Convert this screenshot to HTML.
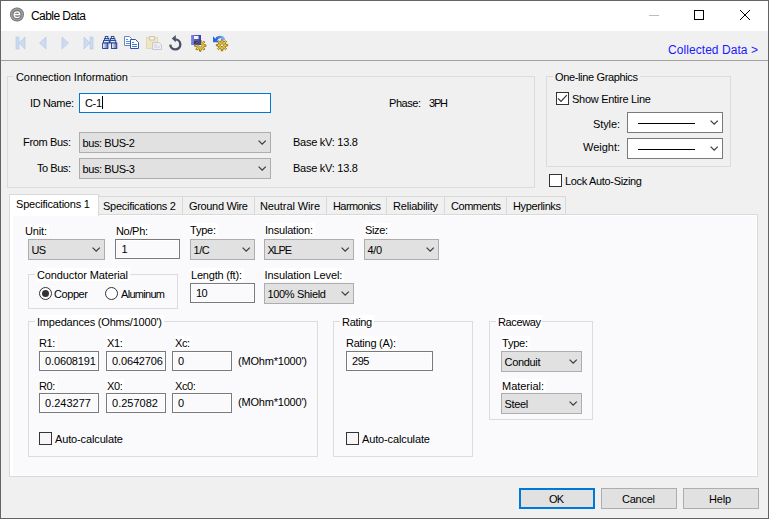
<!DOCTYPE html>
<html><head><meta charset="utf-8"><style>
html,body{margin:0;padding:0;width:769px;height:519px;overflow:hidden;background:#f0f0f0}
body{position:relative;font-family:"Liberation Sans",sans-serif}
.t{position:absolute;white-space:pre;font-family:"Liberation Sans",sans-serif}
.b{position:absolute;box-sizing:border-box}
svg.b{overflow:visible}
</style></head><body>
<div class="b" style="left:0;top:0;width:769px;height:519px;background:#f0f0f0"></div>
<div class="b" style="left:0px;top:0px;width:769px;height:31px;background:#fff"></div>
<div class="b" style="left:0px;top:0px;width:769px;height:1px;background:#646464"></div>
<div class="b" style="left:0px;top:0px;width:1px;height:519px;background:#646464"></div>
<div class="b" style="left:768px;top:0px;width:1px;height:519px;background:#646464"></div>
<div class="b" style="left:0px;top:518px;width:769px;height:1px;background:#646464"></div>
<svg class="b" style="left:0;top:0" width="30" height="30" viewBox="0 0 30 30">
<defs><radialGradient id="gi" cx="0.5" cy="0.5" r="0.5"><stop offset="0" stop-color="#8c8c8c"/><stop offset="0.6" stop-color="#7c7c7c"/><stop offset="0.8" stop-color="#a4a4a4"/><stop offset="1" stop-color="#5e5e5e"/></radialGradient></defs>
<circle cx="17" cy="14.5" r="7" fill="url(#gi)"/>
<path d="M14.3 14.6 H19.8 C19.8 12.8 18.8 11.8 17.1 11.8 C15.3 11.8 14.2 13.1 14.2 14.7 C14.2 16.4 15.4 17.5 17.1 17.5 C18.1 17.5 19 17.2 19.6 16.6" fill="none" stroke="#fff" stroke-width="1.2"/>
</svg>
<div class="t" style="left:31px;top:9px;font-size:12px;line-height:14px;letter-spacing:-0.559px;color:#000;">Cable Data</div>
<div class="b" style="left:649px;top:15px;width:10px;height:1px;background:#bdbdbd"></div>
<div class="b" style="left:694px;top:10px;width:10px;height:10px;border:1px solid #000"></div>
<svg class="b" style="left:739px;top:9px" width="12" height="12" viewBox="0 0 12 12"><path d="M1 1 L11 11 M11 1 L1 11" stroke="#000" stroke-width="1"/></svg>
<div class="b" style="left:1px;top:60px;width:767px;height:1px;background:#a0a0a0"></div>
<svg class="b" style="left:0;top:0" width="240" height="60" viewBox="0 0 240 60">
<rect x="16" y="37" width="3" height="12" fill="#cddbf2" stroke="#a9bfe3" stroke-width="0.5"/>
<path d="M25 37 L19 43 L25 49 Z" fill="#cddbf2" stroke="#a9bfe3" stroke-width="0.5"/>
<path d="M46 37 L39.5 43 L46 49 Z" fill="#cddbf2" stroke="#a9bfe3" stroke-width="0.5"/>
<path d="M62 37 L68.5 43 L62 49 Z" fill="#cddbf2" stroke="#a9bfe3" stroke-width="0.5"/>
<path d="M84 37 L90 43 L84 49 Z" fill="#cddbf2" stroke="#a9bfe3" stroke-width="0.5"/>
<rect x="90" y="37" width="3" height="12" fill="#cddbf2" stroke="#a9bfe3" stroke-width="0.5"/>
<defs>
<linearGradient id="bg1" x1="0" x2="1"><stop offset="0" stop-color="#ffffff"/><stop offset="1" stop-color="#4a68b8"/></linearGradient>
<linearGradient id="fl" x1="0" x2="1"><stop offset="0" stop-color="#8c90e8"/><stop offset="0.4" stop-color="#5a5ec8"/><stop offset="1" stop-color="#3c3fa0"/></linearGradient>
<linearGradient id="ua" x1="0" x2="1"><stop offset="0" stop-color="#2a66d8"/><stop offset="1" stop-color="#86b4f0"/></linearGradient>
</defs>
<!-- binoculars -->
<g stroke="#1e3c8c" stroke-width="0.9">
<rect x="105.3" y="36.4" width="2.6" height="2.2" fill="#ffffff"/>
<rect x="111.3" y="36.4" width="2.6" height="2.2" fill="#ffffff"/>
<rect x="104.4" y="38.6" width="4.5" height="2" fill="#c4d2f0"/>
<rect x="110.4" y="38.6" width="4.5" height="2" fill="#c4d2f0"/>
<rect x="103.5" y="40.6" width="5.8" height="2.4" fill="#f2f6ff"/>
<rect x="110" y="40.6" width="5.8" height="2.4" fill="#f2f6ff"/>
<rect x="102.6" y="43" width="5.3" height="5.5" fill="url(#bg1)"/>
<rect x="111.5" y="43" width="5.3" height="5.5" fill="url(#bg1)"/>
</g>
<rect x="108.8" y="41.5" width="1.5" height="1.5" fill="#1e3c8c"/>
<!-- copy -->
<path d="M124.5 36.5 H129.5 L131.5 38.5 V45.5 H124.5 Z" fill="#fdfdff" stroke="#6c86b8"/>
<path d="M126 39.5 H128 M126 41.5 H130 M126 43.5 H130" stroke="#5b8ee0"/>
<path d="M130.5 39.5 H135.5 L138.5 42.5 V48.5 H130.5 Z" fill="#fdfdff" stroke="#2c52aa"/>
<path d="M132 42.5 H134 M132 44.5 H137 M132 46.5 H137" stroke="#3a78dc"/>
<!-- paste disabled -->
<rect x="146.5" y="37.5" width="11" height="11" fill="#f1e6c4" stroke="#e2d8b8"/>
<rect x="149.5" y="36.5" width="5" height="3.5" fill="#f4f0e4" stroke="#cfc8b4"/>
<path d="M152.5 42.5 H159 L161.5 45 V49.5 H152.5 Z" fill="#eef0f4" stroke="#c4c8d0"/>
<path d="M154 45 H157 M154 47 H160" stroke="#c6ccd8"/>
<!-- refresh -->
<path d="M175.2 39.4 A5 5 0 1 1 170.3 44.6" fill="none" stroke="#4a5468" stroke-width="2.4"/>
<path d="M171.8 38.6 L175.8 35 L175.8 42.2 Z" fill="#4a5468"/>
<!-- save -->
<rect x="191" y="35" width="10" height="10" fill="url(#fl)"/>
<rect x="194" y="36" width="4.5" height="3" fill="#fff"/>
<rect x="194" y="41" width="4.5" height="3" fill="#3a3a40"/>
</svg>
<svg class="b" style="left:0;top:0" width="240" height="60" viewBox="0 0 240 60">
<g transform="translate(200.3,45.6)"><path d="M3.81 -0.84 L5.66 -0.71 L5.66 0.71 L3.81 0.84 L3.28 2.10 L4.50 3.49 L3.49 4.50 L2.10 3.28 L0.84 3.81 L0.71 5.66 L-0.71 5.66 L-0.84 3.81 L-2.10 3.28 L-3.49 4.50 L-4.50 3.49 L-3.28 2.10 L-3.81 0.84 L-5.66 0.71 L-5.66 -0.71 L-3.81 -0.84 L-3.28 -2.10 L-4.50 -3.49 L-3.49 -4.50 L-2.10 -3.28 L-0.84 -3.81 L-0.71 -5.66 L0.71 -5.66 L0.84 -3.81 L2.10 -3.28 L3.49 -4.50 L4.50 -3.49 L3.28 -2.10 Z" fill="#f6e06a" stroke="#8c6a00" stroke-width="0.9"/><circle r="2.9" fill="none" stroke="#c8a020" stroke-width="0.9"/><circle r="1.5" fill="#fffbe8" stroke="#7a5a00" stroke-width="0.7"/></g>
<rect x="191" y="35" width="10" height="10" fill="url(#fl)"/>
<rect x="194" y="36" width="4.5" height="3" fill="#f4f6ff"/>
<rect x="194" y="41" width="4.5" height="3" fill="#3a3e44"/>
<path d="M196 43.5 L198 41.5" stroke="#8a9090" stroke-width="0.8"/>
<g transform="translate(222,45.2)"><path d="M3.81 -0.84 L5.66 -0.71 L5.66 0.71 L3.81 0.84 L3.28 2.10 L4.50 3.49 L3.49 4.50 L2.10 3.28 L0.84 3.81 L0.71 5.66 L-0.71 5.66 L-0.84 3.81 L-2.10 3.28 L-3.49 4.50 L-4.50 3.49 L-3.28 2.10 L-3.81 0.84 L-5.66 0.71 L-5.66 -0.71 L-3.81 -0.84 L-3.28 -2.10 L-4.50 -3.49 L-3.49 -4.50 L-2.10 -3.28 L-0.84 -3.81 L-0.71 -5.66 L0.71 -5.66 L0.84 -3.81 L2.10 -3.28 L3.49 -4.50 L4.50 -3.49 L3.28 -2.10 Z" fill="#f6e06a" stroke="#8c6a00" stroke-width="0.9"/><circle r="2.9" fill="none" stroke="#c8a020" stroke-width="0.9"/><circle r="1.5" fill="#fffbe8" stroke="#7a5a00" stroke-width="0.7"/></g>
<path d="M216.2 40.6 A4 4 0 0 1 224.1 40.2" fill="none" stroke="url(#ua)" stroke-width="2.6"/>
<path d="M213 36.2 L213 42.2 L218.8 42.2 Z" fill="#2a66d8"/>
</svg>
<div class="t" style="left:668px;top:43px;font-size:12px;line-height:14px;letter-spacing:0.064px;color:#1a1aff;">Collected Data &gt;</div>
<div class="b" style="left:7px;top:76px;width:528px;height:112px;border:1px solid #dcdcdc;background:transparent;"></div>
<div class="b" style="left:14px;top:76px;width:116px;height:2px;background:#f0f0f0"></div>
<div class="t" style="left:16px;top:71px;font-size:11px;line-height:13px;letter-spacing:-0.086px;color:#000;">Connection Information</div>
<div class="t" style="left:30px;top:97px;font-size:11px;line-height:13px;letter-spacing:-0.353px;color:#000;">ID Name:</div>
<div class="b" style="left:79px;top:93px;width:192px;height:20px;border:1px solid #0078d7;background:#fff;"></div>
<div class="t" style="left:85px;top:97px;font-size:11px;line-height:13px;letter-spacing:-0.359px;color:#000;">C-1</div>
<div class="b" style="left:102px;top:96px;width:1px;height:13px;background:#000"></div>
<div class="t" style="left:23px;top:136px;font-size:11px;line-height:13px;letter-spacing:-0.344px;color:#000;">From Bus:</div>
<div class="b" style="left:79px;top:132px;width:192px;height:21px;border:1px solid #adadad;background:#e1e1e1;"></div>
<svg class="b" style="left:258px;top:139px" width="9" height="7" viewBox="0 0 9 7"><path d="M0.6 1.6 L4.2 5.2 L7.8 1.6" fill="none" stroke="#3c3c3c" stroke-width="1.25"/></svg>
<div class="t" style="left:82.5px;top:137px;font-size:11px;line-height:13px;letter-spacing:-0.420px;color:#000;">bus: BUS-2</div>
<div class="t" style="left:37px;top:162px;font-size:11px;line-height:13px;letter-spacing:-0.453px;color:#000;">To Bus:</div>
<div class="b" style="left:79px;top:158px;width:192px;height:21px;border:1px solid #adadad;background:#e1e1e1;"></div>
<svg class="b" style="left:258px;top:165px" width="9" height="7" viewBox="0 0 9 7"><path d="M0.6 1.6 L4.2 5.2 L7.8 1.6" fill="none" stroke="#3c3c3c" stroke-width="1.25"/></svg>
<div class="t" style="left:82.5px;top:163px;font-size:11px;line-height:13px;letter-spacing:-0.420px;color:#000;">bus: BUS-3</div>
<div class="t" style="left:389px;top:97px;font-size:11px;line-height:13px;letter-spacing:-0.456px;color:#000;">Phase:</div>
<div class="t" style="left:429px;top:97px;font-size:11px;line-height:13px;letter-spacing:-1.203px;color:#000;">3PH</div>
<div class="t" style="left:293px;top:136px;font-size:11px;line-height:13px;letter-spacing:-0.263px;color:#000;">Base kV: 13.8</div>
<div class="t" style="left:293px;top:162px;font-size:11px;line-height:13px;letter-spacing:-0.263px;color:#000;">Base kV: 13.8</div>
<div class="b" style="left:546px;top:76px;width:185px;height:91px;border:1px solid #dcdcdc;background:transparent;"></div>
<div class="b" style="left:553px;top:76px;width:87px;height:2px;background:#f0f0f0"></div>
<div class="t" style="left:555px;top:71px;font-size:11px;line-height:13px;letter-spacing:-0.355px;color:#000;">One-line Graphics</div>
<div class="b" style="left:556px;top:92px;width:13px;height:13px;border:1px solid #333;background:#fff"></div>
<svg class="b" style="left:556px;top:92px" width="13" height="13" viewBox="0 0 13 13"><path d="M2 6.3 L5 9.3 L10.8 3.2" fill="none" stroke="#333" stroke-width="1.2"/></svg>
<div class="t" style="left:572px;top:93px;font-size:11px;line-height:13px;letter-spacing:-0.281px;color:#000;">Show Entire Line</div>
<div class="t" style="left:593px;top:118px;font-size:11px;line-height:13px;letter-spacing:-0.106px;color:#000;">Style:</div>
<div class="b" style="left:627px;top:112px;width:96px;height:21px;border:1px solid #7a7a7a;background:#fff;"></div>
<div class="b" style="left:638px;top:123px;width:57px;height:1px;background:#000"></div>
<svg class="b" style="left:710px;top:119px" width="9" height="7" viewBox="0 0 9 7"><path d="M0.6 1.6 L4.2 5.2 L7.8 1.6" fill="none" stroke="#3c3c3c" stroke-width="1.25"/></svg>
<div class="t" style="left:583px;top:141px;font-size:11px;line-height:13px;letter-spacing:-0.018px;color:#000;">Weight:</div>
<div class="b" style="left:627px;top:138px;width:96px;height:21px;border:1px solid #7a7a7a;background:#fff;"></div>
<div class="b" style="left:638px;top:149px;width:57px;height:1px;background:#000"></div>
<svg class="b" style="left:710px;top:145px" width="9" height="7" viewBox="0 0 9 7"><path d="M0.6 1.6 L4.2 5.2 L7.8 1.6" fill="none" stroke="#3c3c3c" stroke-width="1.25"/></svg>
<div class="b" style="left:549px;top:174px;width:13px;height:13px;border:1px solid #333;background:#fff"></div>
<div class="t" style="left:565px;top:175px;font-size:11px;line-height:13px;letter-spacing:-0.332px;color:#000;">Lock Auto-Sizing</div>
<div class="b" style="left:9px;top:214px;width:749px;height:263px;border:1px solid #d9d9d9;background:#fff;"></div>
<div class="b" style="left:13px;top:216px;width:743px;height:259px;background:#fafafd"></div>
<div class="b" style="left:98px;top:196px;width:85px;height:19px;border:1px solid #d9d9d9;background:#f0f0f0;"></div>
<div class="t" style="left:103px;top:200px;font-size:11px;line-height:13px;letter-spacing:-0.273px;color:#000;">Specifications 2</div>
<div class="b" style="left:182px;top:196px;width:73px;height:19px;border:1px solid #d9d9d9;background:#f0f0f0;"></div>
<div class="t" style="left:189px;top:200px;font-size:11px;line-height:13px;letter-spacing:-0.338px;color:#000;">Ground Wire</div>
<div class="b" style="left:254px;top:196px;width:73px;height:19px;border:1px solid #d9d9d9;background:#f0f0f0;"></div>
<div class="t" style="left:260px;top:200px;font-size:11px;line-height:13px;letter-spacing:-0.102px;color:#000;">Neutral Wire</div>
<div class="b" style="left:326px;top:196px;width:61px;height:19px;border:1px solid #d9d9d9;background:#f0f0f0;"></div>
<div class="t" style="left:333px;top:200px;font-size:11px;line-height:13px;letter-spacing:-0.570px;color:#000;">Harmonics</div>
<div class="b" style="left:386px;top:196px;width:59px;height:19px;border:1px solid #d9d9d9;background:#f0f0f0;"></div>
<div class="t" style="left:393px;top:200px;font-size:11px;line-height:13px;letter-spacing:-0.206px;color:#000;">Reliability</div>
<div class="b" style="left:444px;top:196px;width:63px;height:19px;border:1px solid #d9d9d9;background:#f0f0f0;"></div>
<div class="t" style="left:451px;top:200px;font-size:11px;line-height:13px;letter-spacing:-0.455px;color:#000;">Comments</div>
<div class="b" style="left:506px;top:196px;width:60px;height:19px;border:1px solid #d9d9d9;background:#f0f0f0;"></div>
<div class="t" style="left:513px;top:200px;font-size:11px;line-height:13px;letter-spacing:-0.372px;color:#000;">Hyperlinks</div>
<div class="b" style="left:9px;top:194px;width:90px;height:22px;border:1px solid #d9d9d9;background:#fff;border-bottom:none;"></div>
<div class="t" style="left:16px;top:198px;font-size:11px;line-height:13px;letter-spacing:-0.206px;color:#000;">Specifications 1</div>
<div class="b" style="left:25px;top:224px;width:24px;height:13px;background:#fff"></div>
<div class="t" style="left:25px;top:225px;font-size:11px;line-height:13px;letter-spacing:-0.156px;color:#000;">Unit:</div>
<div class="b" style="left:28px;top:239px;width:77px;height:21px;border:1px solid #adadad;background:#e1e1e1;"></div>
<svg class="b" style="left:92px;top:246px" width="9" height="7" viewBox="0 0 9 7"><path d="M0.6 1.6 L4.2 5.2 L7.8 1.6" fill="none" stroke="#3c3c3c" stroke-width="1.25"/></svg>
<div class="t" style="left:31.5px;top:244px;font-size:11px;line-height:13px;letter-spacing:-0.764px;color:#000;">US</div>
<div class="b" style="left:116px;top:224px;width:34px;height:13px;background:#fff"></div>
<div class="t" style="left:116px;top:225px;font-size:11px;line-height:13px;letter-spacing:-0.331px;color:#000;">No/Ph:</div>
<div class="b" style="left:115px;top:239px;width:65px;height:20px;border:1px solid #7a7a7a;background:#fafafd;box-shadow:inset 0 0 0 1px #fff;"></div>
<div class="t" style="left:121.5px;top:243px;font-size:11px;line-height:13px;letter-spacing:-0.306px;color:#000;">1</div>
<div class="b" style="left:190px;top:223px;width:28px;height:13px;background:#fff"></div>
<div class="t" style="left:190px;top:224px;font-size:11px;line-height:13px;letter-spacing:-0.230px;color:#000;">Type:</div>
<div class="b" style="left:190px;top:239px;width:65px;height:21px;border:1px solid #adadad;background:#e1e1e1;"></div>
<svg class="b" style="left:242px;top:246px" width="9" height="7" viewBox="0 0 9 7"><path d="M0.6 1.6 L4.2 5.2 L7.8 1.6" fill="none" stroke="#3c3c3c" stroke-width="1.25"/></svg>
<div class="t" style="left:193.5px;top:244px;font-size:11px;line-height:13px;letter-spacing:-0.428px;color:#000;">1/C</div>
<div class="b" style="left:265px;top:223px;width:50px;height:13px;background:#fff"></div>
<div class="t" style="left:265px;top:224px;font-size:11px;line-height:13px;letter-spacing:-0.219px;color:#000;">Insulation:</div>
<div class="b" style="left:264px;top:239px;width:90px;height:21px;border:1px solid #adadad;background:#e1e1e1;"></div>
<svg class="b" style="left:341px;top:246px" width="9" height="7" viewBox="0 0 9 7"><path d="M0.6 1.6 L4.2 5.2 L7.8 1.6" fill="none" stroke="#3c3c3c" stroke-width="1.25"/></svg>
<div class="t" style="left:267.5px;top:244px;font-size:11px;line-height:13px;letter-spacing:-1.219px;color:#000;">XLPE</div>
<div class="b" style="left:365px;top:223px;width:25px;height:13px;background:#fff"></div>
<div class="t" style="left:365px;top:224px;font-size:11px;line-height:13px;letter-spacing:-0.367px;color:#000;">Size:</div>
<div class="b" style="left:364px;top:239px;width:75px;height:21px;border:1px solid #adadad;background:#e1e1e1;"></div>
<svg class="b" style="left:426px;top:246px" width="9" height="7" viewBox="0 0 9 7"><path d="M0.6 1.6 L4.2 5.2 L7.8 1.6" fill="none" stroke="#3c3c3c" stroke-width="1.25"/></svg>
<div class="t" style="left:367.5px;top:244px;font-size:11px;line-height:13px;letter-spacing:-0.383px;color:#000;">4/0</div>
<div class="b" style="left:28px;top:274px;width:150px;height:35px;border:1px solid #dcdcdc;background:transparent;"></div>
<div class="b" style="left:35px;top:274px;width:95px;height:2px;background:#fff"></div>
<div class="b" style="left:37px;top:268px;width:93px;height:13px;background:#fff"></div>
<div class="t" style="left:37px;top:269px;font-size:11px;line-height:13px;letter-spacing:-0.116px;color:#000;">Conductor Material</div>
<svg class="b" style="left:39px;top:287px" width="13" height="13" viewBox="0 0 13 13"><circle cx="6.5" cy="6.5" r="6" fill="#fff" stroke="#333" stroke-width="1"/><circle cx="6.5" cy="6.5" r="3.5" fill="#333"/></svg>
<div class="t" style="left:54px;top:288px;font-size:11px;line-height:13px;letter-spacing:-0.419px;color:#000;">Copper</div>
<svg class="b" style="left:105px;top:287px" width="13" height="13" viewBox="0 0 13 13"><circle cx="6.5" cy="6.5" r="6" fill="#fff" stroke="#333" stroke-width="1"/></svg>
<div class="t" style="left:121px;top:288px;font-size:11px;line-height:13px;letter-spacing:-0.701px;color:#000;">Aluminum</div>
<div class="b" style="left:191px;top:268px;width:53px;height:13px;background:#fff"></div>
<div class="t" style="left:191px;top:269px;font-size:11px;line-height:13px;letter-spacing:-0.205px;color:#000;">Length (ft):</div>
<div class="b" style="left:190px;top:283px;width:65px;height:20px;border:1px solid #7a7a7a;background:#fafafd;box-shadow:inset 0 0 0 1px #fff;"></div>
<div class="t" style="left:196px;top:287px;font-size:11px;line-height:13px;letter-spacing:-0.613px;color:#000;">10</div>
<div class="b" style="left:264px;top:268px;width:80px;height:13px;background:#fff"></div>
<div class="t" style="left:264.5px;top:269px;font-size:11px;line-height:13px;letter-spacing:-0.098px;color:#000;">Insulation Level:</div>
<div class="b" style="left:264px;top:283px;width:90px;height:21px;border:1px solid #adadad;background:#e1e1e1;"></div>
<svg class="b" style="left:341px;top:290px" width="9" height="7" viewBox="0 0 9 7"><path d="M0.6 1.6 L4.2 5.2 L7.8 1.6" fill="none" stroke="#3c3c3c" stroke-width="1.25"/></svg>
<div class="t" style="left:267.5px;top:288px;font-size:11px;line-height:13px;letter-spacing:-0.331px;color:#000;">100% Shield</div>
<div class="b" style="left:28px;top:321px;width:290px;height:136px;border:1px solid #dcdcdc;background:transparent;"></div>
<div class="b" style="left:35px;top:321px;width:129px;height:2px;background:#fff"></div>
<div class="b" style="left:37px;top:315px;width:127px;height:13px;background:#fff"></div>
<div class="t" style="left:37px;top:316px;font-size:11px;line-height:13px;letter-spacing:-0.197px;color:#000;">Impedances (Ohms/1000&#x27;)</div>
<div class="b" style="left:39px;top:336px;width:18px;height:13px;background:#fff"></div>
<div class="t" style="left:39px;top:337px;font-size:11px;line-height:13px;letter-spacing:-0.428px;color:#000;">R1:</div>
<div class="b" style="left:39px;top:351px;width:60px;height:20px;border:1px solid #7a7a7a;background:#fafafd;box-shadow:inset 0 0 0 1px #fff;"></div>
<div class="t" style="left:45px;top:355px;font-size:11px;line-height:13px;letter-spacing:-0.133px;color:#000;">0.0608191</div>
<div class="b" style="left:107px;top:336px;width:17px;height:13px;background:#fff"></div>
<div class="t" style="left:107px;top:337px;font-size:11px;line-height:13px;letter-spacing:-0.413px;color:#000;">X1:</div>
<div class="b" style="left:106px;top:351px;width:60px;height:20px;border:1px solid #7a7a7a;background:#fafafd;box-shadow:inset 0 0 0 1px #fff;"></div>
<div class="t" style="left:112px;top:355px;font-size:11px;line-height:13px;letter-spacing:-0.133px;color:#000;">0.0642706</div>
<div class="b" style="left:175px;top:336px;width:17px;height:13px;background:#fff"></div>
<div class="t" style="left:175px;top:337px;font-size:11px;line-height:13px;letter-spacing:-0.398px;color:#000;">Xc:</div>
<div class="b" style="left:172px;top:351px;width:60px;height:20px;border:1px solid #7a7a7a;background:#fafafd;box-shadow:inset 0 0 0 1px #fff;"></div>
<div class="t" style="left:178px;top:355px;font-size:11px;line-height:13px;letter-spacing:-0.306px;color:#000;">0</div>
<div class="t" style="left:238px;top:355px;font-size:11px;line-height:13px;letter-spacing:-0.199px;color:#000;">(MOhm*1000&#x27;)</div>
<div class="b" style="left:39px;top:379px;width:18px;height:13px;background:#fff"></div>
<div class="t" style="left:39px;top:380px;font-size:11px;line-height:13px;letter-spacing:-0.428px;color:#000;">R0:</div>
<div class="b" style="left:39px;top:393px;width:60px;height:20px;border:1px solid #7a7a7a;background:#fafafd;box-shadow:inset 0 0 0 1px #fff;"></div>
<div class="t" style="left:45px;top:397px;font-size:11px;line-height:13px;letter-spacing:0.009px;color:#000;">0.243277</div>
<div class="b" style="left:107px;top:379px;width:17px;height:13px;background:#fff"></div>
<div class="t" style="left:107px;top:380px;font-size:11px;line-height:13px;letter-spacing:-0.413px;color:#000;">X0:</div>
<div class="b" style="left:106px;top:393px;width:60px;height:20px;border:1px solid #7a7a7a;background:#fafafd;box-shadow:inset 0 0 0 1px #fff;"></div>
<div class="t" style="left:112px;top:397px;font-size:11px;line-height:13px;letter-spacing:0.009px;color:#000;">0.257082</div>
<div class="b" style="left:175px;top:379px;width:22px;height:13px;background:#fff"></div>
<div class="t" style="left:175px;top:380px;font-size:11px;line-height:13px;letter-spacing:-0.367px;color:#000;">Xc0:</div>
<div class="b" style="left:172px;top:393px;width:60px;height:20px;border:1px solid #7a7a7a;background:#fafafd;box-shadow:inset 0 0 0 1px #fff;"></div>
<div class="t" style="left:178px;top:397px;font-size:11px;line-height:13px;letter-spacing:-0.306px;color:#000;">0</div>
<div class="t" style="left:238px;top:396px;font-size:11px;line-height:13px;letter-spacing:-0.199px;color:#000;">(MOhm*1000&#x27;)</div>
<div class="b" style="left:39px;top:432px;width:13px;height:13px;border:1px solid #333;background:#f6f6f9"></div>
<div class="t" style="left:55px;top:433px;font-size:11px;line-height:13px;letter-spacing:-0.135px;color:#000;">Auto-calculate</div>
<div class="b" style="left:333px;top:321px;width:140px;height:136px;border:1px solid #dcdcdc;background:transparent;"></div>
<div class="b" style="left:340px;top:321px;width:34px;height:2px;background:#fff"></div>
<div class="b" style="left:342px;top:315px;width:32px;height:13px;background:#fff"></div>
<div class="t" style="left:342px;top:316px;font-size:11px;line-height:13px;letter-spacing:-0.318px;color:#000;">Rating</div>
<div class="b" style="left:346px;top:336px;width:52px;height:13px;background:#fff"></div>
<div class="t" style="left:346px;top:337px;font-size:11px;line-height:13px;letter-spacing:-0.259px;color:#000;">Rating (A):</div>
<div class="b" style="left:346px;top:351px;width:87px;height:20px;border:1px solid #7a7a7a;background:#fafafd;box-shadow:inset 0 0 0 1px #fff;"></div>
<div class="t" style="left:352px;top:355px;font-size:11px;line-height:13px;letter-spacing:-0.459px;color:#000;">295</div>
<div class="b" style="left:346px;top:432px;width:13px;height:13px;border:1px solid #333;background:#f6f6f9"></div>
<div class="t" style="left:362px;top:433px;font-size:11px;line-height:13px;letter-spacing:-0.135px;color:#000;">Auto-calculate</div>
<div class="b" style="left:489px;top:321px;width:104px;height:99px;border:1px solid #dcdcdc;background:transparent;"></div>
<div class="b" style="left:496px;top:321px;width:46px;height:2px;background:#fff"></div>
<div class="b" style="left:498px;top:315px;width:44px;height:13px;background:#fff"></div>
<div class="t" style="left:498px;top:316px;font-size:11px;line-height:13px;letter-spacing:-0.377px;color:#000;">Raceway</div>
<div class="b" style="left:502px;top:336px;width:28px;height:13px;background:#fff"></div>
<div class="t" style="left:502px;top:337px;font-size:11px;line-height:13px;letter-spacing:-0.230px;color:#000;">Type:</div>
<div class="b" style="left:501px;top:351px;width:81px;height:21px;border:1px solid #adadad;background:#e1e1e1;"></div>
<svg class="b" style="left:569px;top:358px" width="9" height="7" viewBox="0 0 9 7"><path d="M0.6 1.6 L4.2 5.2 L7.8 1.6" fill="none" stroke="#3c3c3c" stroke-width="1.25"/></svg>
<div class="t" style="left:504.5px;top:356px;font-size:11px;line-height:13px;letter-spacing:-0.316px;color:#000;">Conduit</div>
<div class="b" style="left:502px;top:379px;width:44px;height:13px;background:#fff"></div>
<div class="t" style="left:502px;top:380px;font-size:11px;line-height:13px;letter-spacing:-0.023px;color:#000;">Material:</div>
<div class="b" style="left:501px;top:393px;width:81px;height:21px;border:1px solid #adadad;background:#e1e1e1;"></div>
<svg class="b" style="left:569px;top:400px" width="9" height="7" viewBox="0 0 9 7"><path d="M0.6 1.6 L4.2 5.2 L7.8 1.6" fill="none" stroke="#3c3c3c" stroke-width="1.25"/></svg>
<div class="t" style="left:504.5px;top:398px;font-size:11px;line-height:13px;letter-spacing:-0.314px;color:#000;">Steel</div>
<div class="b" style="left:519px;top:488px;width:76px;height:21px;border:2px solid #0078d7;background:#e1e1e1;"></div>
<div class="t" style="left:549px;top:493px;font-size:11px;line-height:13px;letter-spacing:-0.906px;color:#000;">OK</div>
<div class="b" style="left:601px;top:488px;width:76px;height:21px;border:1px solid #adadad;background:#e1e1e1;"></div>
<div class="t" style="left:622px;top:493px;font-size:11px;line-height:13px;letter-spacing:-0.250px;color:#000;">Cancel</div>
<div class="b" style="left:683px;top:488px;width:76px;height:21px;border:1px solid #adadad;background:#e1e1e1;"></div>
<div class="t" style="left:709px;top:493px;font-size:11px;line-height:13px;letter-spacing:-0.208px;color:#000;">Help</div>
</body></html>
